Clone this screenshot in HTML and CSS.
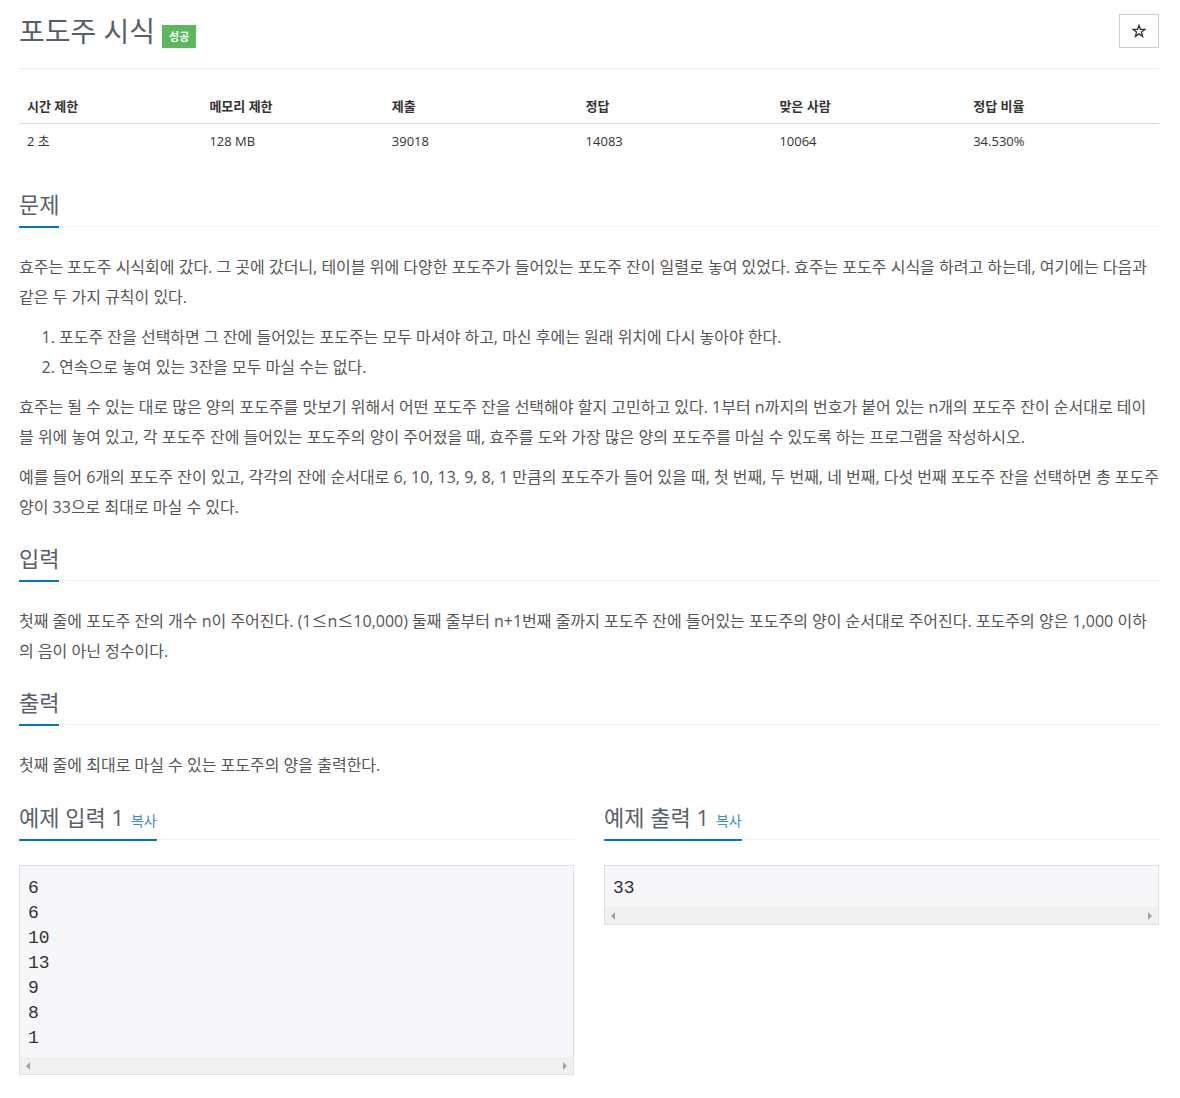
FILE: index.html
```html
<!DOCTYPE html>
<html lang="ko">
<head>
<meta charset="utf-8">
<meta name="viewport" content="width=device-width, initial-scale=1">
<title>포도주 시식</title>
<link rel="stylesheet" href="styles.css">
</head>
<body>
<main class="page">
  <header class="page-header">
    <h1 class="title">포도주 시식</h1>
    <span class="label">성공</span>
    <button class="star-button" type="button" aria-label="즐겨찾기">
      <svg class="star" viewBox="0 0 14 14" aria-hidden="true"><path d="M7 1.2 8.4 5.3 12.9 5.4 9.4 8 10.6 12.4 7 9.9 3.4 12.4 4.6 8 1.1 5.4 5.6 5.3Z"/></svg>
    </button>
  </header>

  <table class="info">
    <thead>
      <tr>
        <th class="col-limit" scope="col">시간 제한</th>
        <th class="col-limit" scope="col">메모리 제한</th>
        <th class="col-count" scope="col">제출</th>
        <th class="col-count" scope="col">정답</th>
        <th class="col-count" scope="col">맞은 사람</th>
        <th class="col-count" scope="col">정답 비율</th>
      </tr>
    </thead>
    <tbody>
      <tr>
        <td>2 초</td>
        <td>128 MB</td>
        <td>39018</td>
        <td>14083</td>
        <td>10064</td>
        <td>34.530%</td>
      </tr>
    </tbody>
  </table>

  <section class="section">
    <div class="headline"><h2>문제</h2></div>
    <div class="text">
      <p>효주는 포도주 시식회에 갔다. 그 곳에 갔더니, 테이블 위에 다양한 포도주가 들어있는 포도주 잔이 일렬로 놓여 있었다. 효주는 포도주 시식을 하려고 하는데, 여기에는 다음과 같은 두 가지 규칙이 있다.</p>
      <ol>
        <li>포도주 잔을 선택하면 그 잔에 들어있는 포도주는 모두 마셔야 하고, 마신 후에는 원래 위치에 다시 놓아야 한다.</li>
        <li>연속으로 놓여 있는 3잔을 모두 마실 수는 없다.</li>
      </ol>
      <p>효주는 될 수 있는 대로 많은 양의 포도주를 맛보기 위해서 어떤 포도주 잔을 선택해야 할지 고민하고 있다. 1부터 n까지의 번호가 붙어 있는 n개의 포도주 잔이 순서대로 테이블 위에 놓여 있고, 각 포도주 잔에 들어있는 포도주의 양이 주어졌을 때, 효주를 도와 가장 많은 양의 포도주를 마실 수 있도록 하는 프로그램을 작성하시오.</p>
      <p>예를 들어 6개의 포도주 잔이 있고, 각각의 잔에 순서대로 6, 10, 13, 9, 8, 1 만큼의 포도주가 들어 있을 때, 첫 번째, 두 번째, 네 번째, 다섯 번째 포도주 잔을 선택하면 총 포도주 양이 33으로 최대로 마실 수 있다.</p>
    </div>
  </section>

  <section class="section">
    <div class="headline"><h2>입력</h2></div>
    <div class="text">
      <p>첫째 줄에 포도주 잔의 개수 n이 주어진다. (1<span class="symbol">≤</span>n<span class="symbol">≤</span>10,000) 둘째 줄부터 n+1번째 줄까지 포도주 잔에 들어있는 포도주의 양이 순서대로 주어진다. 포도주의 양은 1,000 이하의 음이 아닌 정수이다.</p>
    </div>
  </section>

  <section class="section">
    <div class="headline"><h2>출력</h2></div>
    <div class="text">
      <p>첫째 줄에 최대로 마실 수 있는 포도주의 양을 출력한다.</p>
    </div>
  </section>

  <div class="samples">
    <section class="sample">
      <div class="headline headline-sample"><h2>예제 입력 1 <a class="copy" href="#sample-input">복사</a></h2></div>
      <div class="code-box">
        <pre id="sample-input">6
6
10
13
9
8
1</pre>
        <div class="scrollbar" aria-hidden="true"><span class="arrow arrow-left"></span><span class="arrow arrow-right"></span></div>
      </div>
    </section>
    <section class="sample">
      <div class="headline headline-sample"><h2>예제 출력 1 <a class="copy" href="#sample-output">복사</a></h2></div>
      <div class="code-box">
        <pre id="sample-output">33</pre>
        <div class="scrollbar" aria-hidden="true"><span class="arrow arrow-left"></span><span class="arrow arrow-right"></span></div>
      </div>
    </section>
  </div>
</main>
</body>
</html>
```
FILE: styles.css
```css
* {
  box-sizing: border-box;
}

body {
  margin: 0;
  background: #fff;
  color: #333;
  font-family: "Open Sans", "Noto Sans CJK KR", sans-serif;
  font-size: 13px;
  line-height: 18px;
}

.page {
  padding: 0 21px 23px 19px;
}

.page-header {
  display: flex;
  align-items: flex-end;
  gap: 7px;
  padding: 14px 0 20px;
  border-bottom: 1px solid #eee;
}

.title {
  margin: 0;
  color: #585f69;
  font-size: 28px;
  font-weight: 400;
  line-height: 34px;
}

.label {
  padding: 0 7px;
  background: #5cb85c;
  color: #fff;
  font-size: 11px;
  font-weight: 700;
  line-height: 23px;
}

.star-button {
  display: flex;
  align-items: center;
  justify-content: center;
  width: 40px;
  height: 34px;
  margin-left: auto;
  padding: 0;
  border: 1px solid #ccc;
  background: #fff;
  color: #333;
  cursor: pointer;
}

.star {
  width: 14px;
  height: 14px;
  fill: none;
  stroke: currentColor;
  stroke-width: 1.3;
}

.info {
  width: 100%;
  margin: 20px 0 30px;
  border-collapse: separate;
  border-spacing: 0;
  table-layout: fixed;
}

.info th,
.info td {
  padding: 8px;
  text-align: left;
}

.info th {
  border-bottom: 1px solid #ddd;
  font-weight: 700;
}

.col-limit {
  width: 16%;
}

.col-count {
  width: 17%;
}

.section {
  margin-bottom: 20px;
}

.headline {
  display: flex;
  margin-bottom: 25px;
  border-bottom: 1px dotted #e4e9f0;
}

.headline h2 {
  display: flex;
  align-items: baseline;
  gap: 7px;
  margin: 0 0 -2px;
  padding-bottom: 5px;
  border-bottom: 2px solid #0077c0;
  color: #585f69;
  font-size: 22px;
  font-weight: 400;
  line-height: 33px;
}

.headline-sample {
  border-bottom-color: #e4e4e4;
}

.headline-sample h2 {
  line-height: 34px;
}

.copy {
  color: #428bca;
  font-size: 14px;
  line-height: 20px;
  text-decoration: none;
}

.text {
  color: #555;
  font-size: 16px;
  line-height: 30px;
}

.text p,
.text ol {
  margin: 0 0 10px;
}

.text > :last-child {
  margin-bottom: 0;
}

.text ol {
  padding-left: 40px;
}

.symbol {
  font-family: "Noto Sans CJK KR", sans-serif;
  line-height: 20px;
}

.samples {
  display: grid;
  grid-template-columns: 1fr 1fr;
  align-items: start;
  gap: 30px;
}

.code-box {
  border: 1px solid #dedfe4;
  background: #f7f7fa;
}

.code-box pre {
  margin: 0;
  padding: 10px 8px 6px;
  color: #333;
  font-family: "Liberation Mono", monospace;
  font-size: 18px;
  line-height: 25px;
}

.scrollbar {
  display: flex;
  align-items: center;
  justify-content: space-between;
  height: 17px;
  padding: 0 6px;
  background: #f0f0f0;
}

.arrow {
  border: 4px solid transparent;
}

.arrow-left {
  border-left-width: 0;
  border-right-color: #a3a3a3;
}

.arrow-right {
  border-right-width: 0;
  border-left-color: #a3a3a3;
}
```
